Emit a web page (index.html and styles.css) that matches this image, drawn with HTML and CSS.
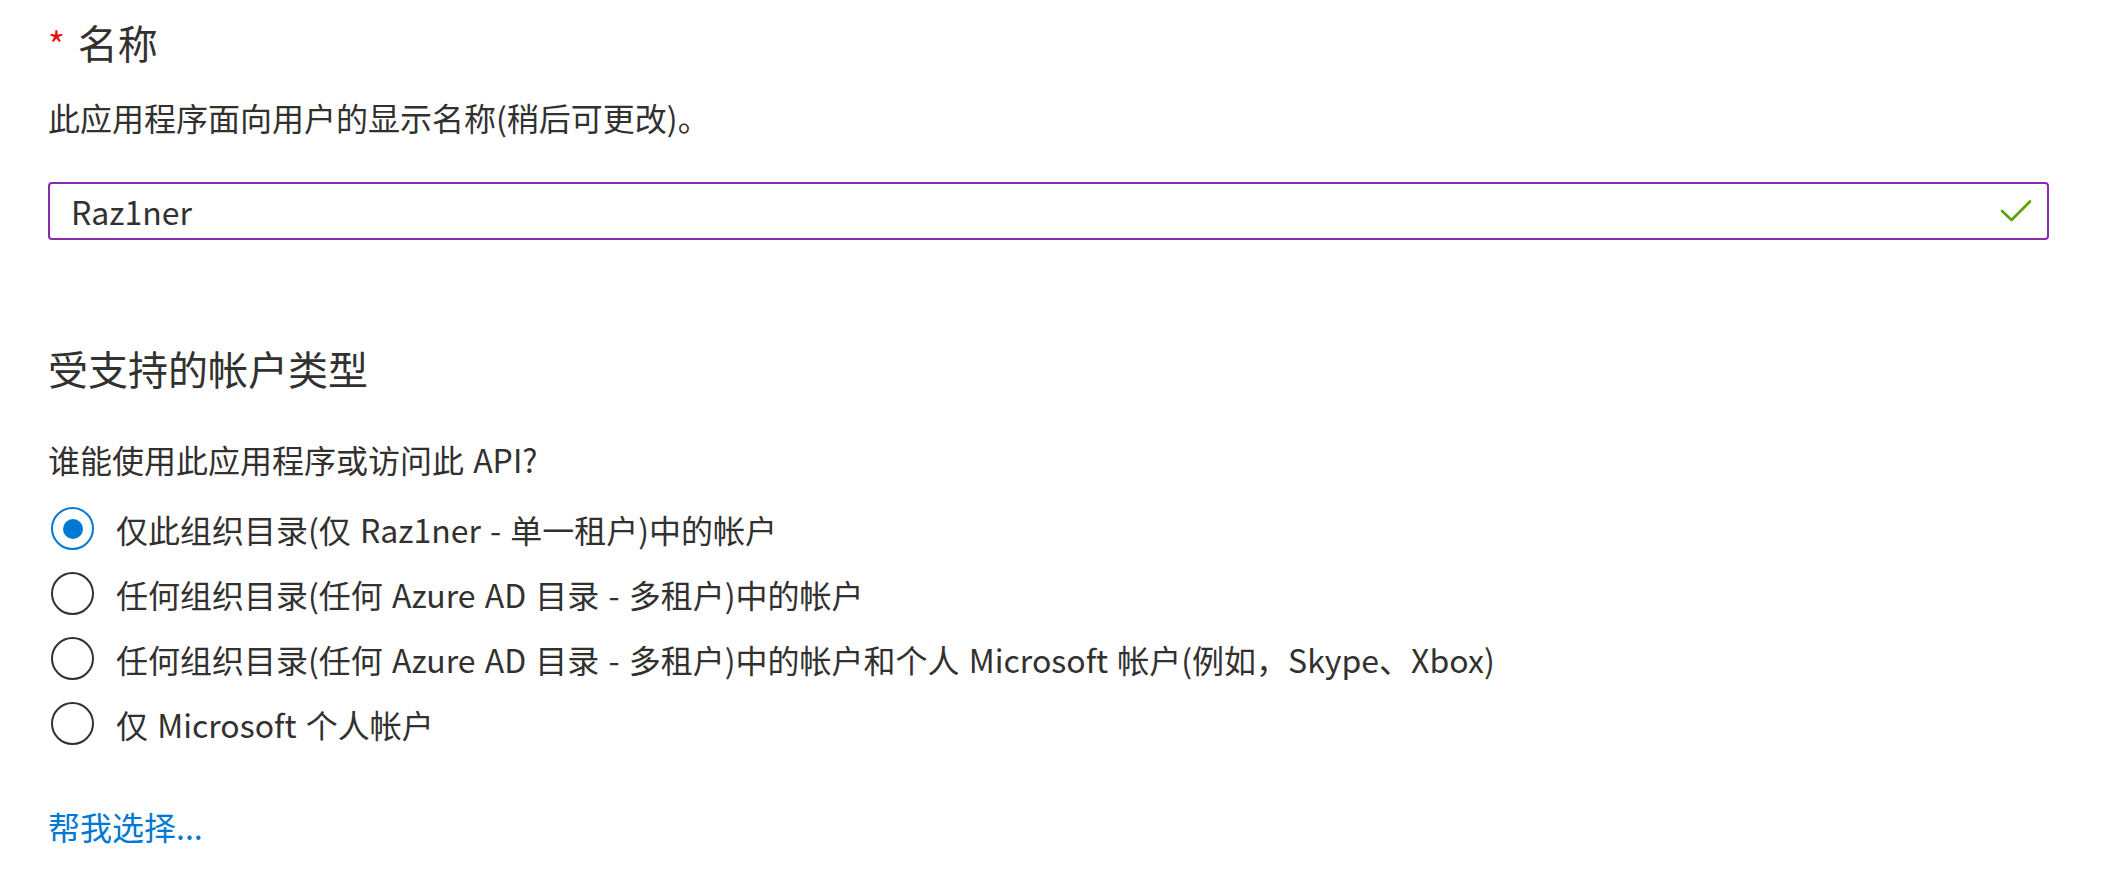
FILE: index.html
```html
<!DOCTYPE html>
<html lang="zh-CN">
<head>
<meta charset="utf-8">
<title>注册应用程序</title>
<link rel="stylesheet" href="styles.css">
</head>
<body>
<main class="form">
  <section class="section name-section">
    <h2 class="field-title"><span class="required">*</span> 名称</h2>
    <p class="desc">此应用程序面向用户的显示名称(稍后可更改)。</p>
    <div class="textfield">
      <span class="textfield-value">Raz1ner</span>
      <svg class="check" width="32" height="24" viewBox="0 0 32 24" aria-hidden="true">
        <polyline points="2,12 11.5,21 30,2.5" fill="none" stroke="#57a300" stroke-width="2.6" stroke-linecap="round" stroke-linejoin="round"/>
      </svg>
    </div>
  </section>

  <section class="section account-section">
    <h2 class="section-title">受支持的帐户类型</h2>
    <p class="question">谁能使用此应用程序或访问此 API?</p>
    <div class="radio-group">
      <div class="radio-row">
        <span class="radio checked"></span>
        <span class="radio-label">仅此组织目录(仅 Raz1ner - 单一租户)中的帐户</span>
      </div>
      <div class="radio-row">
        <span class="radio"></span>
        <span class="radio-label">任何组织目录(任何 Azure AD 目录 - 多租户)中的帐户</span>
      </div>
      <div class="radio-row">
        <span class="radio"></span>
        <span class="radio-label">任何组织目录(任何 Azure AD 目录 - 多租户)中的帐户和个人 Microsoft 帐户(例如，Skype、Xbox)</span>
      </div>
      <div class="radio-row">
        <span class="radio"></span>
        <span class="radio-label">仅 Microsoft 个人帐户</span>
      </div>
    </div>
    <a class="help-link" href="#">帮我选择...</a>
  </section>
</main>
</body>
</html>
```

FILE: styles.css
```css
html, body {
  margin: 0;
  padding: 0;
  background: #ffffff;
}

body {
  font-family: "Noto Sans CJK SC", "Noto Sans", sans-serif;
  color: #323130;
  word-spacing: 2px;
}

.form {
  padding: 18px 63px 0 48px;
}

.field-title,
.section-title {
  margin: 0;
  font-size: 40px;
  line-height: 48px;
  font-weight: 400;
  color: #323130;
}

.required {
  display: inline-block;
  margin-right: 2px;
  color: #e3120b;
  font-size: 36px;
  line-height: 36px;
  vertical-align: 0;
}

.desc,
.question {
  margin: 0;
  font-size: 32px;
  line-height: 44px;
}

.desc {
  margin-top: 29px;
}

.textfield {
  margin-top: 43px;
  height: 58px;
  box-sizing: border-box;
  border: 2px solid #8a2aa6;
  border-radius: 4px;
  display: flex;
  align-items: center;
  justify-content: space-between;
  padding: 0 15px 0 21px;
}

.textfield-value {
  font-size: 32px;
  line-height: 44px;
  color: #323130;
}

.check {
  display: block;
}

.account-section {
  margin-top: 104px;
}

.question {
  margin-top: 45px;
}

.radio-group {
  margin-top: 15px;
  display: flex;
  flex-direction: column;
}

.radio-row {
  height: 65px;
  display: flex;
  align-items: center;
  gap: 22px;
}

.radio {
  flex: none;
  margin-left: 3px;
  width: 43px;
  height: 43px;
  box-sizing: border-box;
  border: 2px solid #323130;
  border-radius: 50%;
  display: flex;
  align-items: center;
  justify-content: center;
}

.radio.checked {
  border-color: #0078d4;
}

.radio.checked::after {
  content: "";
  width: 20px;
  height: 20px;
  border-radius: 50%;
  background: #0078d4;
}

.radio-label {
  font-size: 32px;
  line-height: 44px;
  white-space: nowrap;
}

.help-link {
  display: inline-block;
  margin-top: 48px;
  font-size: 32px;
  line-height: 44px;
  color: #0078d4;
  text-decoration: none;
}
```
